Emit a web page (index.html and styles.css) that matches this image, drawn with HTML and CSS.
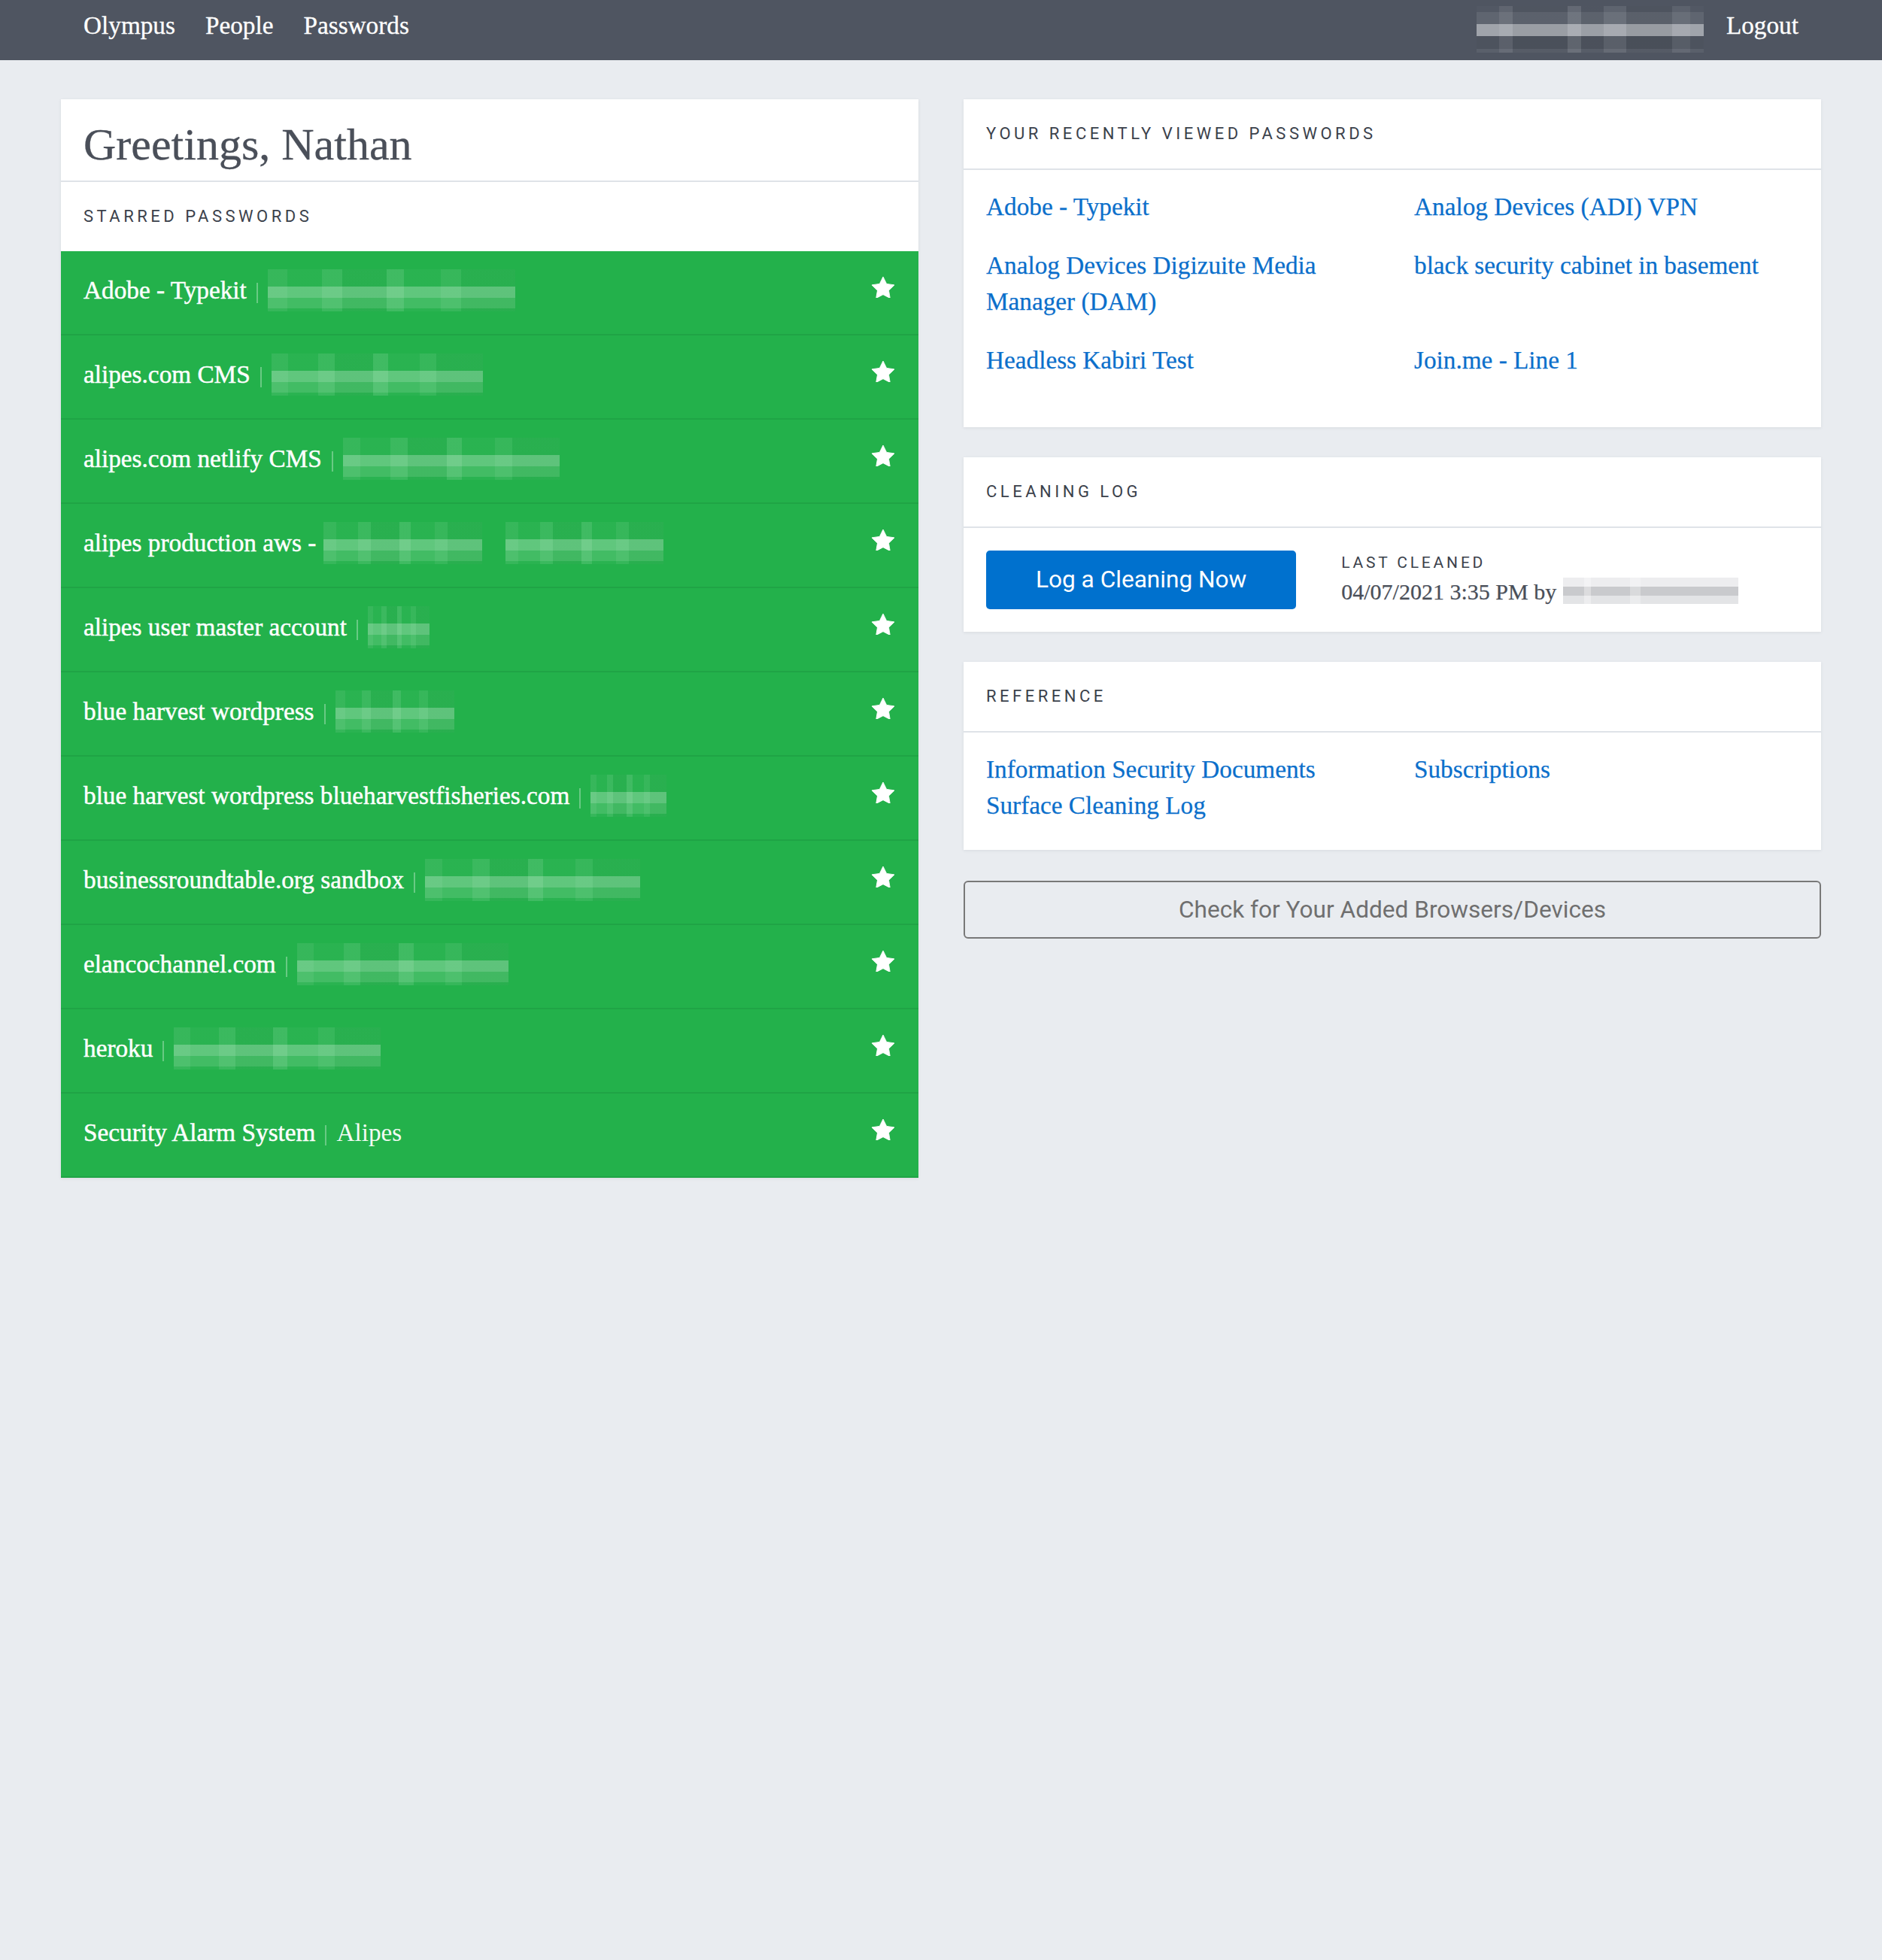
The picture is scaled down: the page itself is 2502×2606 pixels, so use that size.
FILE: index.html
```html
<!DOCTYPE html>
<html lang="en">
<head>
<meta charset="utf-8">
<title>Olympus</title>
<link rel="stylesheet" href="styles.css">
</head>
<body>
<header class="topbar">
  <div class="topbar-inner">
    <nav class="main-nav">
      <a href="#">Olympus</a>
      <a href="#">People</a>
      <a href="#">Passwords</a>
    </nav>
    <div class="user-nav">
      <span class="user-blur"></span>
      <a href="#">Logout</a>
    </div>
  </div>
</header>

<main class="dashboard">
  <section class="card starred-card">
    <div class="card-title"><h1>Greetings, Nathan</h1></div>
    <div class="card-header"><h2>Starred Passwords</h2></div>
    <ul class="starred-list">
      <li class="starred-item"><span class="item-text"><span class="item-name">Adobe - Typekit</span><span class="sep"></span><span class="blur" style="width:329px"></span></span><svg class="star" viewBox="2 2 20 19.02"><polygon points="12,2 15.09,8.26 22,9.27 17,14.14 18.18,21.02 12,17.77 5.82,21.02 7,14.14 2,9.27 8.91,8.26"/></svg></li>
      <li class="starred-item"><span class="item-text"><span class="item-name">alipes.com CMS</span><span class="sep"></span><span class="blur" style="width:281px"></span></span><svg class="star" viewBox="2 2 20 19.02"><polygon points="12,2 15.09,8.26 22,9.27 17,14.14 18.18,21.02 12,17.77 5.82,21.02 7,14.14 2,9.27 8.91,8.26"/></svg></li>
      <li class="starred-item"><span class="item-text"><span class="item-name">alipes.com netlify CMS</span><span class="sep"></span><span class="blur" style="width:288px"></span></span><svg class="star" viewBox="2 2 20 19.02"><polygon points="12,2 15.09,8.26 22,9.27 17,14.14 18.18,21.02 12,17.77 5.82,21.02 7,14.14 2,9.27 8.91,8.26"/></svg></li>
      <li class="starred-item"><span class="item-text"><span class="item-name">alipes production aws -</span><span class="blur blur-first" style="width:211px"></span><span class="blur blur-next" style="width:210px"></span></span><svg class="star" viewBox="2 2 20 19.02"><polygon points="12,2 15.09,8.26 22,9.27 17,14.14 18.18,21.02 12,17.77 5.82,21.02 7,14.14 2,9.27 8.91,8.26"/></svg></li>
      <li class="starred-item"><span class="item-text"><span class="item-name">alipes user master account</span><span class="sep"></span><span class="blur" style="width:82px"></span></span><svg class="star" viewBox="2 2 20 19.02"><polygon points="12,2 15.09,8.26 22,9.27 17,14.14 18.18,21.02 12,17.77 5.82,21.02 7,14.14 2,9.27 8.91,8.26"/></svg></li>
      <li class="starred-item"><span class="item-text"><span class="item-name">blue harvest wordpress</span><span class="sep"></span><span class="blur" style="width:158px"></span></span><svg class="star" viewBox="2 2 20 19.02"><polygon points="12,2 15.09,8.26 22,9.27 17,14.14 18.18,21.02 12,17.77 5.82,21.02 7,14.14 2,9.27 8.91,8.26"/></svg></li>
      <li class="starred-item"><span class="item-text"><span class="item-name">blue harvest wordpress blueharvestfisheries.com</span><span class="sep"></span><span class="blur" style="width:101px"></span></span><svg class="star" viewBox="2 2 20 19.02"><polygon points="12,2 15.09,8.26 22,9.27 17,14.14 18.18,21.02 12,17.77 5.82,21.02 7,14.14 2,9.27 8.91,8.26"/></svg></li>
      <li class="starred-item"><span class="item-text"><span class="item-name">businessroundtable.org sandbox</span><span class="sep"></span><span class="blur" style="width:286px"></span></span><svg class="star" viewBox="2 2 20 19.02"><polygon points="12,2 15.09,8.26 22,9.27 17,14.14 18.18,21.02 12,17.77 5.82,21.02 7,14.14 2,9.27 8.91,8.26"/></svg></li>
      <li class="starred-item"><span class="item-text"><span class="item-name">elancochannel.com</span><span class="sep"></span><span class="blur" style="width:281px"></span></span><svg class="star" viewBox="2 2 20 19.02"><polygon points="12,2 15.09,8.26 22,9.27 17,14.14 18.18,21.02 12,17.77 5.82,21.02 7,14.14 2,9.27 8.91,8.26"/></svg></li>
      <li class="starred-item"><span class="item-text"><span class="item-name">heroku</span><span class="sep"></span><span class="blur" style="width:275px"></span></span><svg class="star" viewBox="2 2 20 19.02"><polygon points="12,2 15.09,8.26 22,9.27 17,14.14 18.18,21.02 12,17.77 5.82,21.02 7,14.14 2,9.27 8.91,8.26"/></svg></li>
      <li class="starred-item"><span class="item-text"><span class="item-name">Security Alarm System</span><span class="sep"></span><span class="item-sub">Alipes</span></span><svg class="star" viewBox="2 2 20 19.02"><polygon points="12,2 15.09,8.26 22,9.27 17,14.14 18.18,21.02 12,17.77 5.82,21.02 7,14.14 2,9.27 8.91,8.26"/></svg></li>
    </ul>
  </section>

  <div class="side-col">
    <section class="card">
      <div class="card-header"><h2>Your Recently Viewed Passwords</h2></div>
      <div class="card-body">
        <ul class="link-grid recent-grid">
          <li><a href="#">Adobe - Typekit</a></li>
          <li><a href="#">Analog Devices (ADI) VPN</a></li>
          <li><a href="#">Analog Devices Digizuite Media Manager (DAM)</a></li>
          <li><a href="#">black security cabinet in basement</a></li>
          <li><a href="#">Headless Kabiri Test</a></li>
          <li><a href="#">Join.me - Line 1</a></li>
        </ul>
      </div>
    </section>

    <section class="card">
      <div class="card-header"><h2>Cleaning Log</h2></div>
      <div class="card-body cleaning-body">
        <a href="#" class="btn-primary">Log a Cleaning Now</a>
        <div class="last-cleaned">
          <div class="last-label">Last Cleaned</div>
          <div class="last-date">04/07/2021 3:35 PM by<span class="name-blur"></span></div>
        </div>
      </div>
    </section>

    <section class="card">
      <div class="card-header"><h2>Reference</h2></div>
      <div class="card-body">
        <div class="link-grid">
          <ul class="link-list">
            <li><a href="#">Information Security Documents</a></li>
            <li><a href="#">Surface Cleaning Log</a></li>
          </ul>
          <ul class="link-list">
            <li><a href="#">Subscriptions</a></li>
          </ul>
        </div>
      </div>
    </section>

    <a href="#" class="btn-outline">Check for Your Added Browsers/Devices</a>
  </div>
</main>
</body>
</html>
```

FILE: styles.css
```css
html, body {
  margin: 0;
  padding: 0;
}

body {
  background: #e9ecf0;
  font-family: "Liberation Serif", "Times New Roman", serif;
  font-size: 33.25px;
  line-height: 48px;
  color: #4a4f59;
  min-height: 2606px;
}

a {
  text-decoration: none;
}

ul {
  list-style: none;
  margin: 0;
  padding: 0;
}

/* ---------- top bar ---------- */
.topbar {
  background: #4f5561;
  height: 80px;
}

.topbar-inner {
  max-width: 2340px;
  margin: 0 auto;
  padding: 0 30px;
  box-sizing: border-box;
  height: 80px;
  display: flex;
  justify-content: space-between;
  align-items: flex-start;
}

.main-nav {
  display: flex;
  gap: 40px;
  padding-top: 10px;
}

.main-nav a,
.user-nav a {
  color: #ffffff;
  line-height: 48px;
  -webkit-text-stroke: 0.3px #ffffff;
}

.user-nav {
  display: flex;
  align-items: flex-start;
  gap: 30px;
}

.user-nav a {
  padding-top: 10px;
}

.user-blur {
  display: block;
  width: 302px;
  height: 62px;
  margin-top: 8px;
  background:
    linear-gradient(to right,
      rgba(255, 255, 255, 0) 0 10%,
      rgba(255, 255, 255, 0.08) 10% 16%,
      rgba(0, 0, 0, 0.04) 16% 40%,
      rgba(255, 255, 255, 0.1) 40% 46%,
      rgba(0, 0, 0, 0.03) 46% 56%,
      rgba(255, 255, 255, 0.07) 56% 66%,
      rgba(0, 0, 0, 0.05) 66% 86%,
      rgba(255, 255, 255, 0.06) 86% 94%,
      rgba(0, 0, 0, 0) 94% 100%),
    linear-gradient(to bottom,
      #525864 0 8px,
      #5f6570 8px 24px,
      #a0a4ab 24px 40px,
      #4d535e 40px 57px,
      #5a606b 57px 62px);
}

/* ---------- layout ---------- */
.dashboard {
  max-width: 2340px;
  margin: 0 auto;
  padding-top: 52px;
  display: grid;
  grid-template-columns: 1fr 1fr;
  column-gap: 60px;
  align-items: start;
}

.side-col {
  display: flex;
  flex-direction: column;
  gap: 40px;
}

/* ---------- cards ---------- */
.card {
  background: #ffffff;
  box-shadow: 0 1px 4px rgba(40, 50, 70, 0.09);
}

.card-title {
  padding: 24px 30px 12px;
  border-bottom: 2px solid #dfe3e8;
}

.card-title h1 {
  margin: 0;
  font-size: 60px;
  line-height: 72px;
  font-weight: normal;
  color: #4a4f59;
  -webkit-text-stroke: 0.3px #4a4f59;
}

.card-header {
  padding: 30px 30px;
  border-bottom: 2px solid #dfe3e8;
}

.starred-card .card-header {
  border-bottom: none;
}

.card-header h2 {
  margin: 0;
  font-family: Roboto, "Liberation Sans", sans-serif;
  font-size: 22px;
  line-height: 32px;
  font-weight: 400;
  letter-spacing: 4.5px;
  text-transform: uppercase;
  color: #3b414b;
}

.card-body {
  padding: 25px 30px 35px;
}

/* ---------- starred list ---------- */
.starred-item {
  display: flex;
  align-items: center;
  justify-content: space-between;
  background: #23b14b;
  border-bottom: 2px solid #1fa445;
  padding: 28px 32px 34px 30px;
  color: #ffffff;
}

.item-text {
  display: flex;
  align-items: center;
  white-space: nowrap;
}

.item-name {
  -webkit-text-stroke: 0.45px #ffffff;
}

.item-sub {
  color: #f2fbf4;
}

.sep {
  display: block;
  width: 2px;
  height: 27px;
  margin: 6px 13px 0;
  background: rgba(255, 255, 255, 0.32);
}

.blur {
  display: block;
  height: 56px;
  margin: -4px 0;
  background:
    linear-gradient(to right,
      rgba(255, 255, 255, 0.06) 0 8%,
      rgba(255, 255, 255, 0) 8% 22%,
      rgba(255, 255, 255, 0.08) 22% 30%,
      rgba(0, 0, 0, 0.02) 30% 48%,
      rgba(255, 255, 255, 0.1) 48% 55%,
      rgba(255, 255, 255, 0) 55% 70%,
      rgba(255, 255, 255, 0.06) 70% 78%,
      rgba(0, 0, 0, 0.02) 78% 100%),
    linear-gradient(to bottom,
      rgba(255, 255, 255, 0.03) 0 23px,
      rgba(255, 255, 255, 0.28) 23px 38px,
      rgba(255, 255, 255, 0.14) 38px 52px,
      rgba(255, 255, 255, 0.03) 52px 56px);
}

.blur-first {
  margin-left: 10px;
}

.blur-next {
  margin-left: 31px;
}

.star {
  width: 30px;
  height: 28.5px;
  margin-bottom: 8px;
  flex: none;
  fill: #ffffff;
  stroke: #ffffff;
  stroke-width: 0.6;
  stroke-linejoin: round;
}

/* ---------- link grids ---------- */
.link-grid {
  display: grid;
  grid-template-columns: 1fr 1fr;
  column-gap: 58px;
}

.link-grid a {
  color: #0b6fcb;
  -webkit-text-stroke: 0.25px #0b6fcb;
}

.recent-grid li {
  margin-bottom: 30px;
}

/* ---------- cleaning log ---------- */
.cleaning-body {
  padding: 30px;
  display: flex;
  align-items: center;
  gap: 60px;
}

.btn-primary {
  display: flex;
  align-items: center;
  justify-content: center;
  height: 78px;
  padding: 0 66px;
  background: #0071ce;
  border-radius: 5px;
  color: #ffffff;
  font-family: Roboto, "Liberation Sans", sans-serif;
  font-size: 31.6px;
  line-height: 40px;
}

.last-label {
  font-family: Roboto, "Liberation Sans", sans-serif;
  font-size: 21px;
  line-height: 26px;
  letter-spacing: 3.8px;
  text-transform: uppercase;
  color: #3b414b;
  margin-bottom: 6px;
}

.last-date {
  font-size: 30px;
  line-height: 40px;
  color: #4a4f59;
  white-space: nowrap;
  -webkit-text-stroke: 0.25px #4a4f59;
}

.name-blur {
  display: inline-block;
  width: 233px;
  height: 35px;
  margin: -4px 0 0 9px;
  vertical-align: -6px;
  background:
    linear-gradient(to right,
      rgba(255, 255, 255, 0) 0 12%,
      rgba(255, 255, 255, 0.35) 12% 16%,
      rgba(255, 255, 255, 0) 16% 38%,
      rgba(255, 255, 255, 0.3) 38% 44%,
      rgba(255, 255, 255, 0) 44% 100%),
    linear-gradient(to bottom,
      #ededef 0 12px,
      #c9cacd 12px 24px,
      #e3e4e6 24px 35px);
}

/* ---------- outline button ---------- */
.btn-outline {
  display: block;
  box-sizing: border-box;
  height: 77px;
  margin-top: 1px;
  border: 2px solid #787878;
  border-radius: 6px;
  text-align: center;
  font-family: Roboto, "Liberation Sans", sans-serif;
  font-size: 31.6px;
  line-height: 73px;
  color: #6f6f6f;
}
```
